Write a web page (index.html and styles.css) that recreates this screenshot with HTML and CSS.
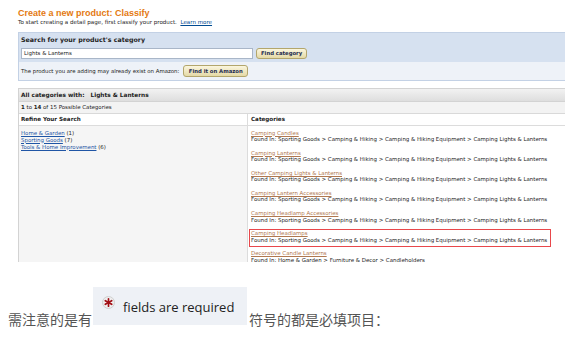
FILE: index.html
```html
<!DOCTYPE html>
<html>
<head>
<meta charset="utf-8">
<link rel="stylesheet" href="styles.css">
</head>
<body>
<div class="shot">
  <h1 class="title">Create a new product: Classify</h1>
  <p class="sub">To start creating a detail page, first classify your product.&nbsp;&nbsp;<a href="#">Learn more</a></p>
  <div class="searchbox">
    <div class="sb-head">
      <div class="sb-title">Search for your product's category</div>
      <div class="sb-row">
        <div class="input">Lights &amp; Lanterns</div>
        <span class="btn">Find category</span>
      </div>
    </div>
    <div class="sb-foot">
      <span>The product you are adding may already exist on Amazon:</span>
      <span class="btn">Find it on Amazon</span>
    </div>
  </div>
  <div class="results">
    <div class="r-head">All categories with:&nbsp;&nbsp; Lights &amp; Lanterns</div>
    <div class="r-count"><b>1</b> to <b>14</b> of 15 Possible Categories</div>
    <div class="r-grid">
      <div class="th th-left">Refine Your Search</div>
      <div class="th">Categories</div>
      <div class="td-left">
        <div><a href="#">Home &amp; Garden</a> (1)</div>
        <div><a href="#">Sporting Goods</a> (7)</div>
        <div><a href="#">Tools &amp; Home Improvement</a> (6)</div>
      </div>
      <div class="td-right">
        <div class="item"><a href="#">Camping Candles</a><div>Found In: Sporting Goods &gt; Camping &amp; Hiking &gt; Camping &amp; Hiking Equipment &gt; Camping Lights &amp; Lanterns</div></div>
        <div class="item"><a href="#">Camping Lanterns</a><div>Found In: Sporting Goods &gt; Camping &amp; Hiking &gt; Camping &amp; Hiking Equipment &gt; Camping Lights &amp; Lanterns</div></div>
        <div class="item"><a href="#">Other Camping Lights &amp; Lanterns</a><div>Found In: Sporting Goods &gt; Camping &amp; Hiking &gt; Camping &amp; Hiking Equipment &gt; Camping Lights &amp; Lanterns</div></div>
        <div class="item"><a href="#">Camping Lantern Accessories</a><div>Found In: Sporting Goods &gt; Camping &amp; Hiking &gt; Camping &amp; Hiking Equipment &gt; Camping Lights &amp; Lanterns</div></div>
        <div class="item"><a href="#">Camping Headlamp Accessories</a><div>Found In: Sporting Goods &gt; Camping &amp; Hiking &gt; Camping &amp; Hiking Equipment &gt; Camping Lights &amp; Lanterns</div></div>
        <div class="item mark"><a href="#">Camping Headlamps</a><div>Found In: Sporting Goods &gt; Camping &amp; Hiking &gt; Camping &amp; Hiking Equipment &gt; Camping Lights &amp; Lanterns</div></div>
        <div class="item"><a href="#">Decorative Candle Lanterns</a><div>Found In: Home &amp; Garden &gt; Furniture &amp; Decor &gt; Candleholders</div></div>
      </div>
    </div>
  </div>
</div>
<p class="note">需注意的是有<span class="req"><span class="req-in"><svg class="star" width="13" height="13" viewBox="0 0 13 13"><defs><radialGradient id="g"><stop offset="0" stop-color="#ffffff"/><stop offset="1" stop-color="#e9e9e9"/></radialGradient></defs><circle cx="6.5" cy="6.5" r="6" fill="url(#g)" stroke="#d0d0d0" stroke-width="1"/><g stroke="#a00d14" stroke-width="1.7" stroke-linecap="round"><line x1="6.5" y1="2.8" x2="6.5" y2="10.2"/><line x1="3.3" y1="4.65" x2="9.7" y2="8.35"/><line x1="3.3" y1="8.35" x2="9.7" y2="4.65"/></g></svg><span class="req-text">fields are required</span></span></span>符号的都是必填项目：</p>
</body>
</html>
```

FILE: styles.css
```css
html, body {
  margin: 0;
  padding: 0;
  background: #fff;
}
body {
  width: 565px;
  height: 353px;
  overflow: hidden;
}
.shot {
  height: 262px;
  overflow: hidden;
  box-sizing: border-box;
  padding: 8px 0 0 18px;
  font-family: "DejaVu Sans", Verdana, sans-serif;
  font-size: 5.45px;
  color: #222;
}
.title {
  margin: 0;
  font: bold 9px/11px "Liberation Sans", Arial, sans-serif;
  color: #e47911;
}
.sub {
  margin: 0;
  line-height: 7px;
  font-size: 5.55px;
}
.sub a {
  color: #004b91;
}
.searchbox {
  margin-top: 6px;
  width: 560px;
  border: 1px solid #c3d1e5;
}
.sb-head {
  background: #d6e1f0;
  padding: 3px 2px 3px 2px;
}
.sb-title {
  font-weight: bold;
  font-size: 6.3px;
  line-height: 7px;
}
.sb-row {
  display: flex;
  align-items: center;
  gap: 3px;
  margin-top: 5px;
}
.input {
  width: 232px;
  height: 11px;
  box-sizing: border-box;
  border: 1px solid #a9b6c8;
  background: #fff;
  padding-left: 2px;
  line-height: 9px;
}
.btn {
  display: inline-block;
  box-sizing: border-box;
  height: 11px;
  padding: 0 4px;
  border: 1px solid #b3a66c;
  border-radius: 3px;
  background: linear-gradient(#fbf6de, #e4d9a6);
  font-weight: bold;
  font-size: 5.3px;
  line-height: 9px;
  color: #1d2b4f;
}
.sb-foot {
  height: 18px;
  box-sizing: border-box;
  background: #eef2f8;
  padding: 0 2px;
  display: flex;
  align-items: center;
  gap: 4px;
}
.sb-foot span:first-child {
  font-size: 5.4px;
}
.sb-foot .btn {
  height: 12px;
  line-height: 10px;
  padding: 0 4.5px;
}
.results {
  margin-top: 7px;
  width: 560px;
  border: 1px solid #d3d3d3;
}
.r-head {
  height: 12px;
  line-height: 12px;
  padding-left: 2px;
  font-weight: bold;
  font-size: 5.8px;
  background: linear-gradient(#f2f2f2, #dedede);
  border-bottom: 1px solid #d3d3d3;
}
.r-count {
  height: 11px;
  line-height: 11px;
  padding-left: 2px;
  background: #f3f3f3;
  border-bottom: 1px solid #d9d9d9;
}
.r-grid {
  display: grid;
  grid-template-columns: 229px 1fr;
}
.th {
  height: 11px;
  line-height: 11px;
  padding-left: 3px;
  font-weight: bold;
  font-size: 5.6px;
  background: #fff;
  border-bottom: 1px solid #dcdcdc;
}
.th-left {
  padding-left: 2px;
  border-right: 1px solid #dcdcdc;
}
.td-left {
  background: #f5f5f5;
  border-right: 1px solid #dcdcdc;
  padding: 3.5px 2px;
  line-height: 7px;
  height: 200px;
}
.td-left a {
  color: #1f55a5;
}
.td-right {
  padding: 3.5px 3px;
  line-height: 6.7px;
  white-space: nowrap;
}
.item {
  position: relative;
  margin-bottom: 6.7px;
}
.item a {
  color: #b07850;
}
.mark::after {
  content: "";
  position: absolute;
  left: -2px;
  top: -0.5px;
  width: 302px;
  height: 18px;
  box-sizing: border-box;
  border: 1.5px solid #e8474b;
}
.note {
  margin: 25px 0 0;
  padding-left: 8px;
  font-family: "Noto Sans CJK SC", sans-serif;
  font-size: 14px;
  line-height: 1;
  color: #555;
  white-space: nowrap;
}
.req {
  display: inline-block;
  overflow: hidden;
  vertical-align: baseline;
  width: 154px;
  height: 38px;
  box-sizing: border-box;
  margin: 0 2px 0 1px;
  padding: 9px 0 0 9px;
  background: #eef1f6;
}
.req-in {
  display: flex;
  align-items: flex-start;
  gap: 8px;
}
.star {
  display: block;
  flex: none;
}
.req-text {
  margin-top: 3px;
  font: 13px/16px "Open Sans", sans-serif;
  color: #222;
}
```
